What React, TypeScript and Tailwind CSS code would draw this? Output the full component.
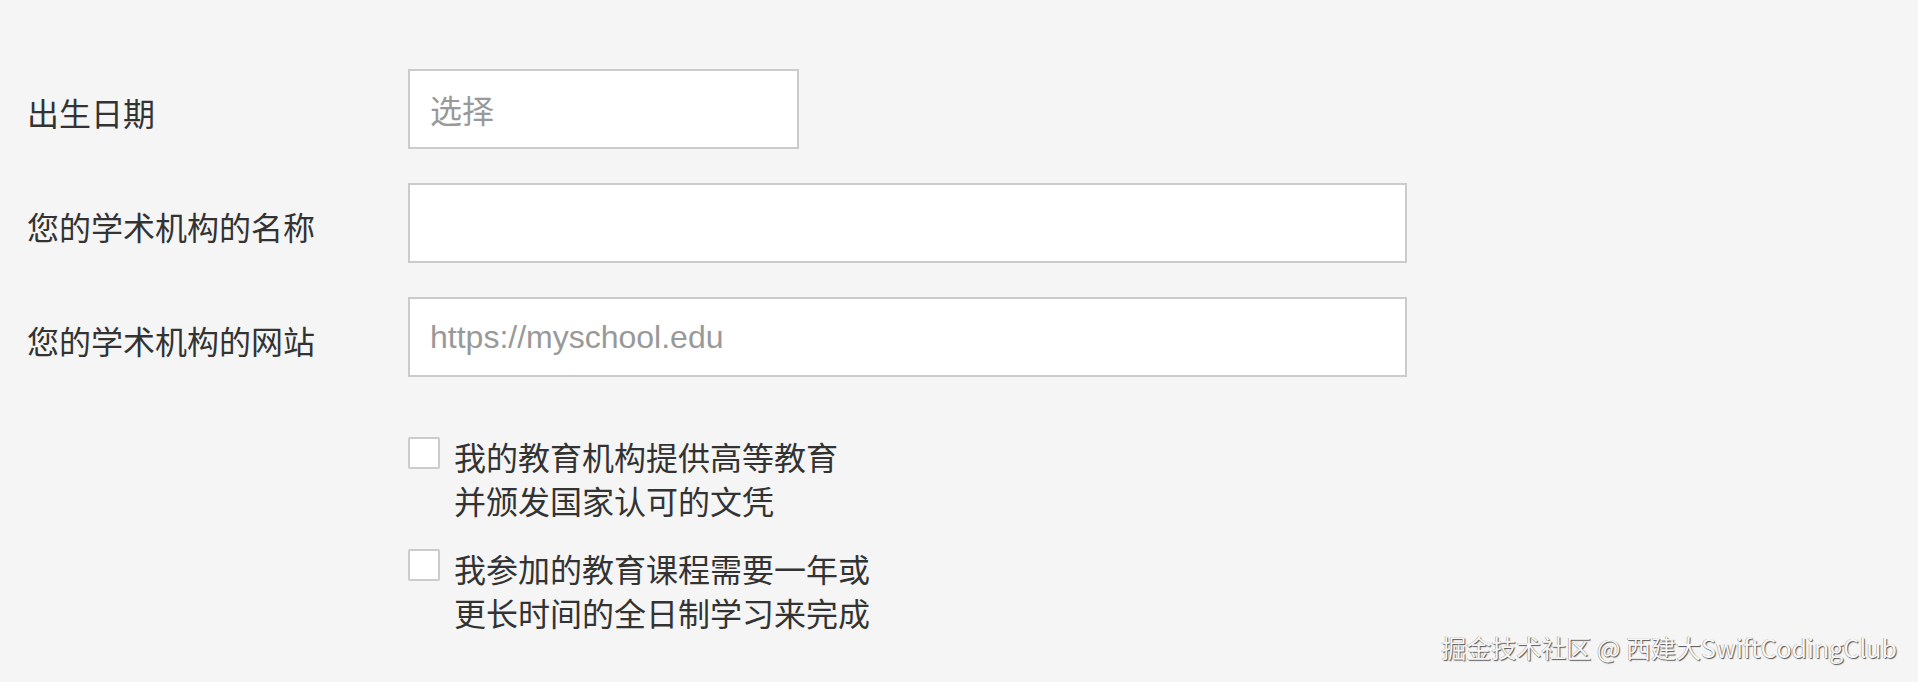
import React from "react";

const cjk = { fontFamily: '"Noto Sans CJK SC", "Liberation Sans", sans-serif' };
const latin = { fontFamily: '"Liberation Sans", "Noto Sans CJK SC", sans-serif' };

function Row({ label, children }: { label: string; children: React.ReactNode }) {
  return (
    <div className="flex items-center">
      <div className="w-[381px] shrink-0 pt-[6px] text-[32px] leading-[44px] text-[#333333]">{label}</div>
      {children}
    </div>
  );
}

function Field({ placeholder, wide, font }: { placeholder?: string; wide?: boolean; font?: React.CSSProperties }) {
  return (
    <div
      className={
        "flex h-[80px] items-center border-2 border-[#cbcbcb] bg-white px-[20px] text-[32px] text-[#999999] " +
        (wide ? "w-[999px]" : "w-[391px]")
      }
      style={font}
    >
      {placeholder}
    </div>
  );
}

function Check({ lines }: { lines: string[] }) {
  return (
    <div className="flex items-start gap-[14px]">
      <div className="mt-[3px] h-[32px] w-[32px] shrink-0 rounded-[2px] border-2 border-[#cbcbcb] bg-white" />
      <div className="text-[32px] leading-[44px] text-[#333333]">
        {lines.map((l) => (
          <div key={l}>{l}</div>
        ))}
      </div>
    </div>
  );
}

export default function App() {
  return (
    <div className="relative h-[682px] w-full overflow-hidden bg-[#f5f5f5]" style={cjk}>
      <div className="flex flex-col pl-[27px] pt-[69px]">
        <div className="flex flex-col gap-[34px]">
          <Row label="出生日期">
            <Field placeholder="选择" />
          </Row>
          <Row label="您的学术机构的名称">
            <Field wide />
          </Row>
          <Row label="您的学术机构的网站">
            <Field wide placeholder="https://myschool.edu" font={latin} />
          </Row>
        </div>
        <div className="ml-[381px] mt-[57px] flex flex-col gap-[24px]">
          <Check lines={["我的教育机构提供高等教育", "并颁发国家认可的文凭"]} />
          <Check lines={["我参加的教育课程需要一年或", "更长时间的全日制学习来完成"]} />
        </div>
      </div>

      {/* watermark */}
      <div
        className="absolute bottom-[20px] right-[21px] text-[25px] leading-[30px] text-[#f7f7f7]"
        style={{ textShadow: "1px 1px 1px #555, -0.5px -0.5px 0.5px #999" }}
      >
        掘金技术社区 @ 西建大SwiftCodingClub
      </div>
    </div>
  );
}
